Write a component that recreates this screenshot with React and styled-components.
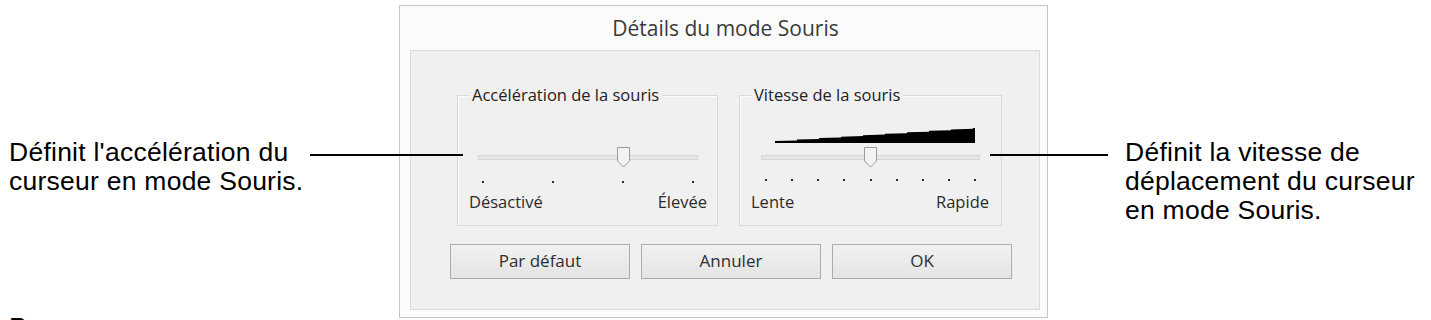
import React from "react";
import styled, { createGlobalStyle } from "styled-components";

const GlobalStyle = createGlobalStyle`
  html, body {
    margin: 0;
    padding: 0;
    background: #ffffff;
  }
`;

const Page = styled.div`
  position: relative;
  display: flex;
  width: 1431px;
  height: 320px;
  overflow: hidden;
  background: #fff;
`;

const Note = styled.div`
  flex: 0 0 ${(p) => p.width}px;
  box-sizing: border-box;
  padding: 138px 0 0 ${(p) => p.inset}px;
  font-family: "Liberation Sans", Arial, sans-serif;
  font-size: 26.5px;
  letter-spacing: 0.25px;
  line-height: 29px;
  color: #000;
  white-space: nowrap;
  p {
    margin: 0;
  }
  p + p {
    margin-top: 117px;
  }
`;

const Callout = styled.div`
  position: absolute;
  top: 154px;
  left: ${(p) => p.from}px;
  width: ${(p) => p.to - p.from}px;
  height: 2px;
  background: #000;
`;

const Dialog = styled.div`
  flex: 0 0 649px;
  box-sizing: border-box;
  height: 313px;
  margin-top: 5px;
  border: 1px solid #c6c6c6;
  background: #fbfbfb;
  display: flex;
  flex-direction: column;
  font-family: "Open Sans", "Noto Sans", sans-serif;
  color: #2b2b2b;
`;

const TitleBar = styled.div`
  height: 44px;
  display: flex;
  align-items: center;
  justify-content: center;
  font-size: 21px;
  color: #3a3a3a;
  padding-left: 4px;
`;

const Panel = styled.div`
  flex: 1;
  margin: 0 7px 7px 10px;
  border: 1px solid #dcdcdc;
  background: #f0f0f0;
  display: flex;
  flex-direction: column;
  padding: 44px 0 0 0;
`;

const GroupRow = styled.div`
  display: flex;
  gap: 21px;
  padding-left: 46px;
`;

const Group = styled.div`
  position: relative;
  box-sizing: border-box;
  width: ${(p) => p.width}px;
  height: 131px;
  border: 1px solid #d9d9d9;
  box-shadow: inset 1px 1px 0 #fbfbfb;
  display: flex;
  flex-direction: column;
`;

const Legend = styled.span`
  position: absolute;
  top: -12px;
  left: 11px;
  padding: 0 3px;
  background: #f0f0f0;
  font-size: 16.5px;
  line-height: 22px;
  color: #222;
`;

const WedgeArea = styled.div`
  height: 47px;
  display: flex;
  align-items: flex-end;
  padding-left: 35px;
`;

const TrackRow = styled.div`
  position: relative;
  height: 28px;
  margin: 0 ${(p) => p.right}px 0 ${(p) => p.left}px;
  display: flex;
  align-items: center;
`;

const Track = styled.div`
  flex: 1;
  height: 3px;
  background: #e6e6e6;
  border: 1px solid #d7d7d7;
`;

const Thumb = styled.svg`
  position: absolute;
  top: 4px;
  margin-left: -6.5px;
`;

const TickRow = styled.div`
  height: ${(p) => p.height}px;
  margin: 0 ${(p) => p.right + 4}px 0 ${(p) => p.left + 5}px;
  display: flex;
  justify-content: space-between;
  align-items: flex-end;
`;

const Tick = styled.span`
  width: 2px;
  height: 2px;
  background: #2a2a2a;
  margin-left: -1px;
`;

const LabelRow = styled.div`
  display: flex;
  justify-content: space-between;
  padding: ${(p) => p.gap}px ${(p) => p.right}px 0 11px;
  font-size: 16.5px;
  line-height: 22px;
  color: #2b2b2b;
`;

const ButtonRow = styled.div`
  display: flex;
  gap: 11px;
  padding: 18px 0 0 39px;
`;

const Button = styled.button`
  width: 180px;
  height: 35px;
  border: 1px solid #acacac;
  border-radius: 0;
  background: linear-gradient(#f1f1f1, #e4e4e4);
  font-family: "Open Sans", "Noto Sans", sans-serif;
  font-size: 17px;
  color: #2f2f2f;
  padding: 0;
  padding-bottom: 2px;
`;

const Wedge = () => {
  // staircase wedge, 9 steps growing from thin to full height
  const pts = ["0,15"];
  const steps = 9;
  for (let i = 0; i <= steps; i++) {
    const x0 = i * 22;
    const x1 = i === steps ? 200 : (i + 1) * 22;
    const h = 2 + i * 1.45;
    pts.push(`${x0},${15 - h}`, `${x1},${15 - h - 0.6}`);
  }
  pts.push("200,15");
  return (
    <svg width="200" height="15" viewBox="0 0 200 15">
      <polygon points={pts.join(" ")} fill="#000" />
    </svg>
  );
};

const Slider = ({ width, ticks, value, left, right, tickHeight, labels, labelRight, labelGap, wedge }) => {
  const trackWidth = width - 2 - left - right;
  const pos = 5 + ((trackWidth - 10) * value) / (ticks - 1);
  return (
    <>
      <WedgeArea>{wedge && <Wedge />}</WedgeArea>
      <TrackRow left={left} right={right}>
        <Track />
        <Thumb width="13" height="21" viewBox="0 0 13 21" style={{ left: pos }}>
          <polygon
            points="0.5,0.5 12.5,0.5 12.5,14 6.5,20 0.5,14"
            fill="#f3f3f3"
            stroke="#9c9c9c"
          />
        </Thumb>
      </TrackRow>
      <TickRow left={left} right={right} height={tickHeight}>
        {Array.from({ length: ticks }).map((_, i) => (
          <Tick key={i} />
        ))}
      </TickRow>
      <LabelRow right={labelRight} gap={labelGap}>
        <span>{labels[0]}</span>
        <span>{labels[1]}</span>
      </LabelRow>
    </>
  );
};

const App = () => {
  return (
    <>
      <GlobalStyle />
      <Page>
        <Note width={399} inset={9}>
          <p>
            Définit l'accélération du
            <br />
            curseur en mode Souris.
          </p>
          <p>P</p>
        </Note>
        <Dialog>
          <TitleBar>Détails du mode Souris</TitleBar>
          <Panel>
            <GroupRow>
              <Group width={261}>
                <Legend>Accélération de la souris</Legend>
                <Slider
                  width={261}
                  ticks={4}
                  value={2}
                  left={20}
                  right={19}
                  tickHeight={12}
                  labels={["Désactivé", "Élevée"]}
                  labelRight={10}
                  labelGap={8}
                />
              </Group>
              <Group width={263}>
                <Legend>Vitesse de la souris</Legend>
                <Slider
                  width={263}
                  ticks={9}
                  value={4}
                  left={21}
                  right={21}
                  tickHeight={10}
                  labels={["Lente", "Rapide"]}
                  labelRight={12}
                  labelGap={10}
                  wedge
                />
              </Group>
            </GroupRow>
            <ButtonRow>
              <Button>Par défaut</Button>
              <Button>Annuler</Button>
              <Button>OK</Button>
            </ButtonRow>
          </Panel>
        </Dialog>
        <Note width={383} inset={77}>
          <p>
            Définit la vitesse de
            <br />
            déplacement du curseur
            <br />
            en mode Souris.
          </p>
        </Note>
        <Callout from={310} to={463} />
        <Callout from={990} to={1108} />
      </Page>
    </>
  );
};

export default App;
